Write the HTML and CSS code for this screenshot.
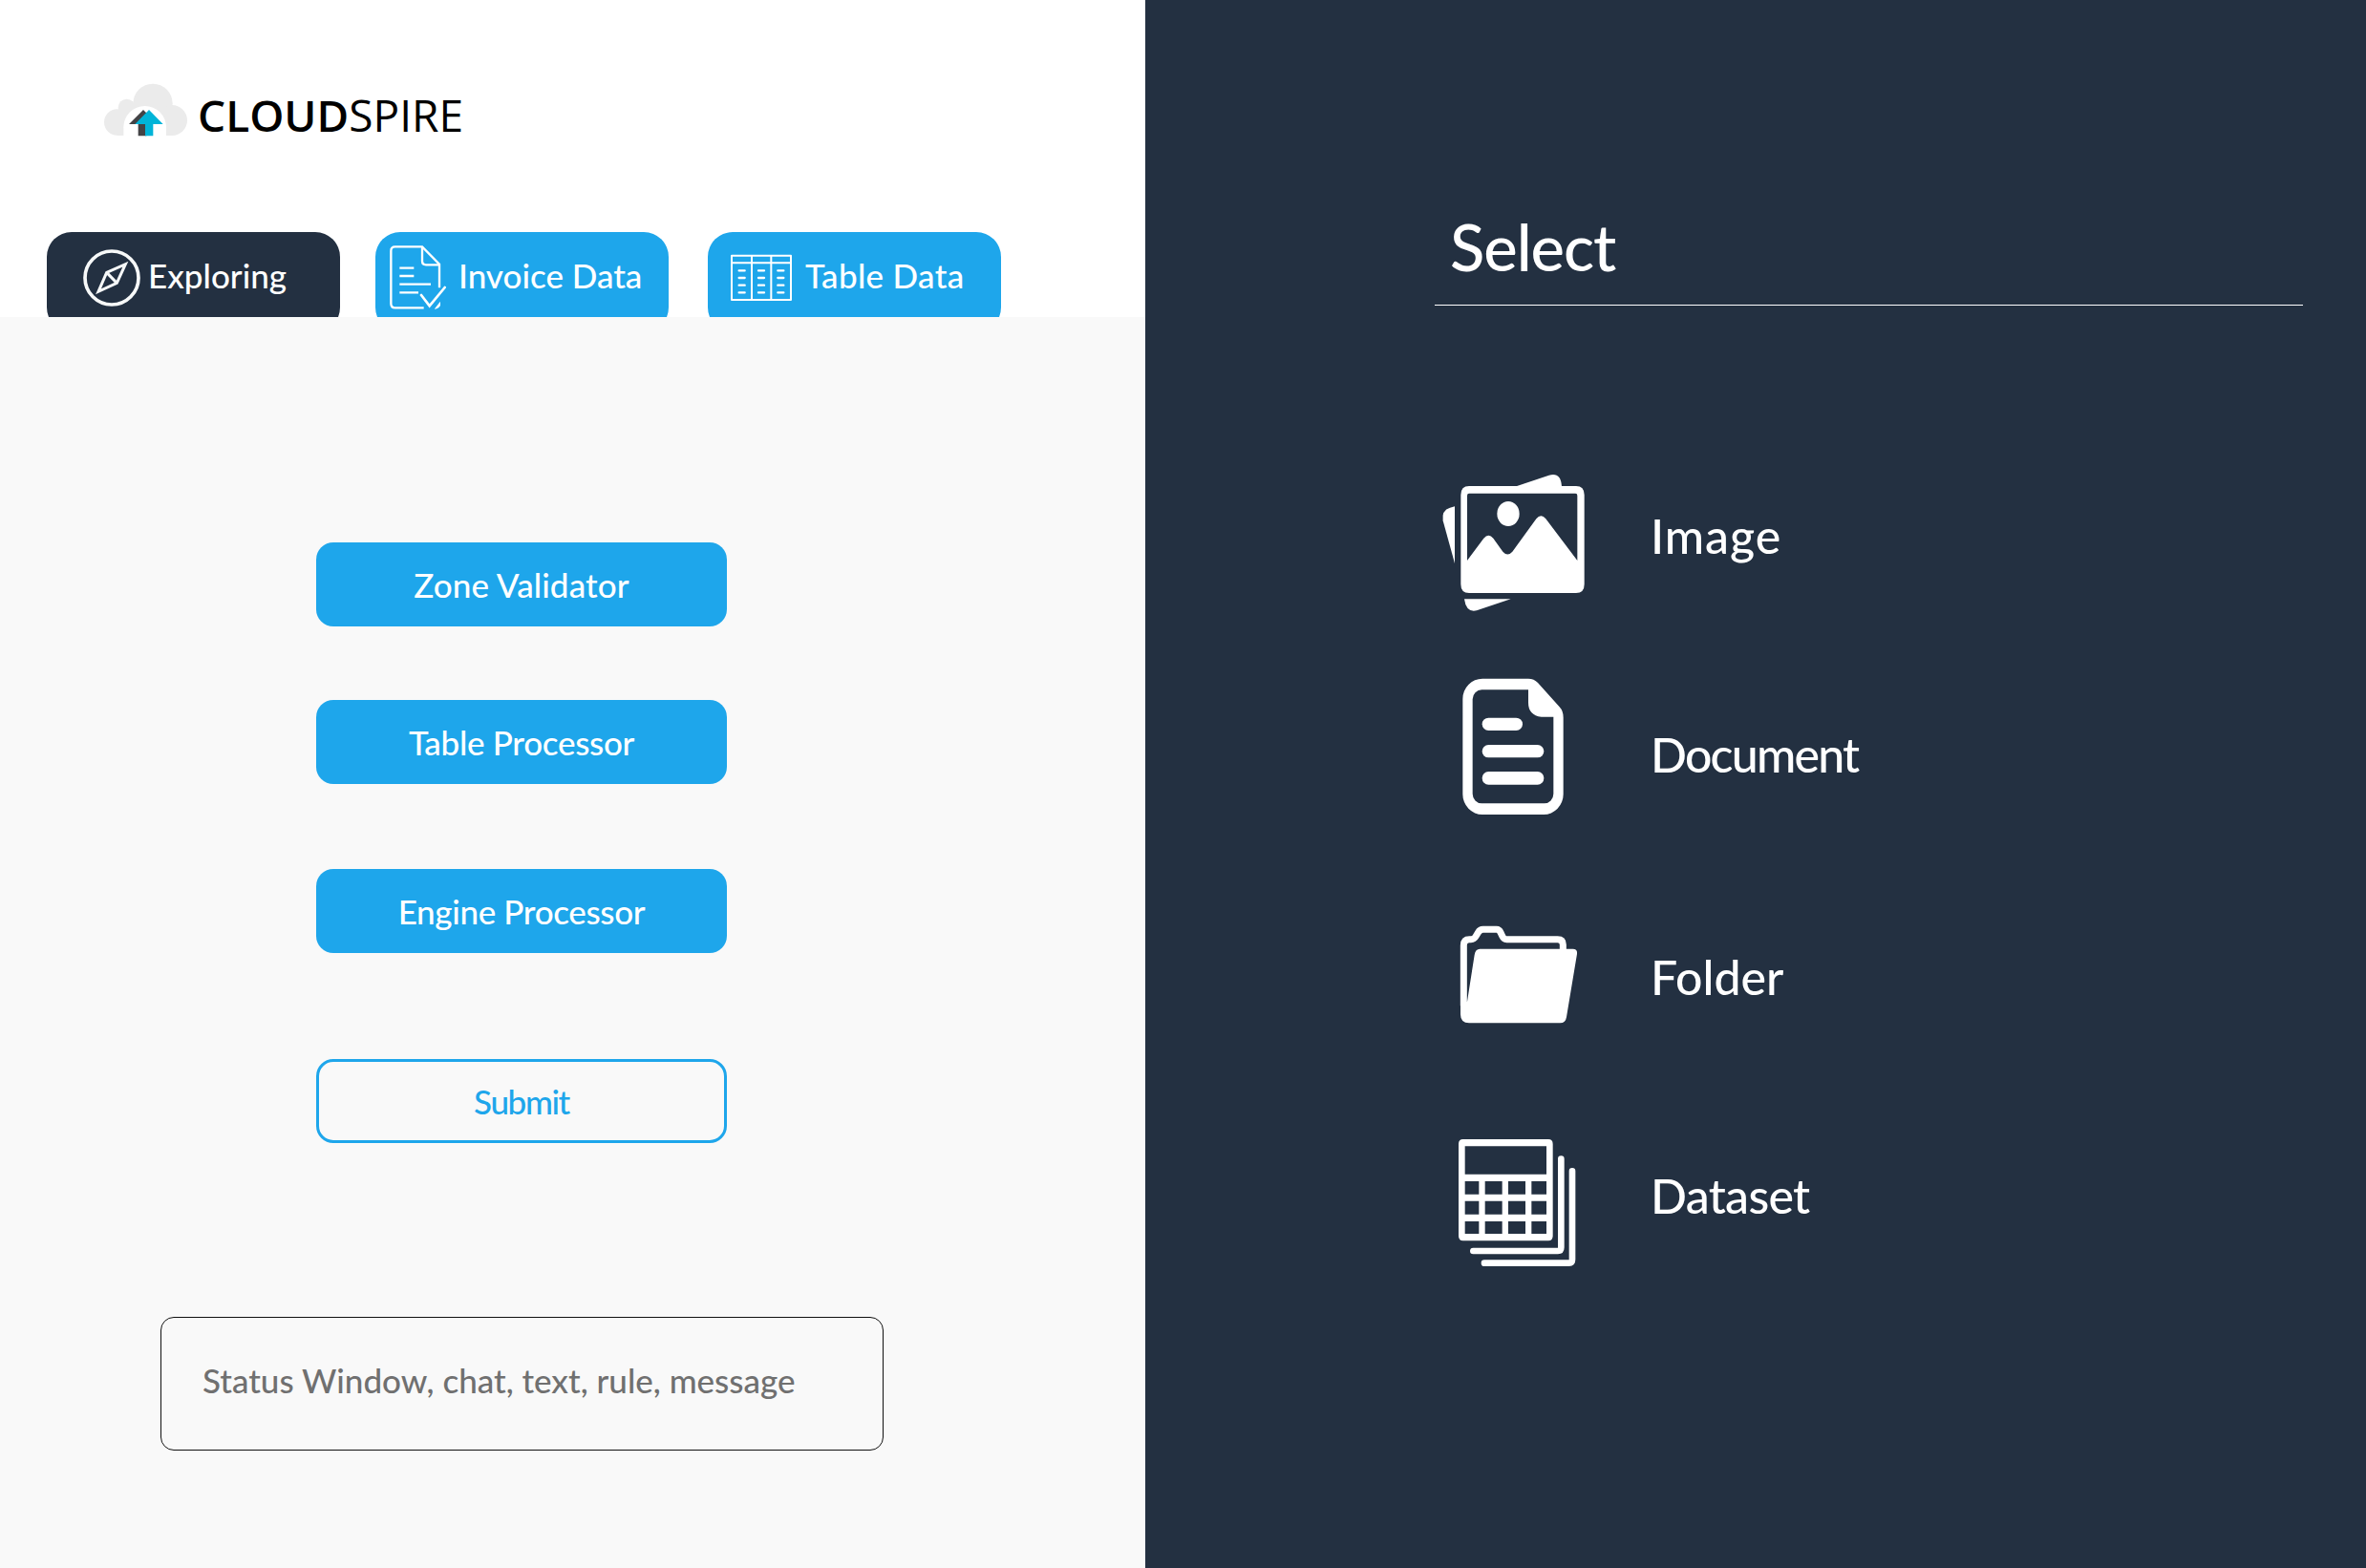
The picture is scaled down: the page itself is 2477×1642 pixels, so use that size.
FILE: index.html
```html
<!DOCTYPE html>
<html lang="en">
<head>
<meta charset="utf-8">
<title>Cloudspire</title>
<link rel="stylesheet" href="styles.css">
</head>
<body>
<div class="app">
  <main class="workspace">
    <header class="header">
      <div class="logo">
        <svg class="logo-mark" viewBox="57 51 264 168" aria-hidden="true">
          <g fill="#ebebeb">
            <circle cx="98" cy="174" r="41"/>
            <circle cx="128" cy="128" r="27"/>
            <circle cx="210" cy="115" r="62"/>
            <circle cx="270" cy="168" r="48"/>
            <path d="M98 140H270V216H98Z"/>
          </g>
          <path d="M118 219V190A67 67 0 0 1 252 190V219Z" fill="#fff"/>
          <path d="M135 180L180 135L225 180H190V217H164V180Z" fill="#434345"/>
          <path d="M154 180L198 135L242 180H211V217H186V180Z" fill="#00b4d8"/>
        </svg>
        <div class="logo-text"><span class="logo-strong">CLOUD</span>SPIRE</div>
      </div>
      <nav class="tabs">
        <a class="tab tab-exploring">
          <svg class="tab-icon" viewBox="171 39 180 267" aria-hidden="true">
            <g fill="none" stroke="#f7f9f9">
              <circle cx="261" cy="183" r="84" stroke-width="11"/>
              <path d="M219 226L245 166L304 140L277 199Z" stroke-width="9"/>
              <path d="M245 166L277 199" stroke-width="9"/>
            </g>
          </svg>
          <span>Exploring</span>
        </a>
        <a class="tab tab-invoice">
          <svg class="tab-icon" viewBox="84 39 177 267" aria-hidden="true">
            <g fill="none" stroke="#fff" stroke-width="7">
              <path d="M240 214V140L186 85H101Q88 85 88 98V264Q88 277 101 277H191"/>
              <path d="M186 85V130Q186 142 198 142H240"/>
              <path d="M115 152H160M115 177H160M115 203H213M115 229H174"/>
              <path d="M183 237L209 271L257 213" stroke-width="8" stroke-linecap="round"/>
            </g>
            <path d="M243 257V268Q241 280 224 281Z" fill="#fff"/>
          </svg>
          <span>Invoice Data</span>
        </a>
        <a class="tab tab-table">
          <svg class="tab-icon" viewBox="105 39 192 267" aria-hidden="true">
            <g fill="none" stroke="#fff" stroke-width="6">
              <path d="M108 113H294V252H108ZM108 136H294M171 113V252M232 113V252" stroke-linejoin="round"/>
              <path d="M131 160H149M192 160H210M253 160H271M131 183H149M192 183H210M253 183H271M131 206H149M192 206H210M253 206H271M131 229H149M192 229H210M253 229H271" stroke-width="7" stroke-linecap="round"/>
            </g>
          </svg>
          <span>Table Data</span>
        </a>
      </nav>
    </header>
    <section class="content">
      <div class="actions">
        <button class="button zone">Zone Validator</button>
        <button class="button table">Table Processor</button>
        <button class="button engine">Engine Processor</button>
        <button class="button submit">Submit</button>
      </div>
      <div class="status">Status Window, chat, text, rule, message</div>
    </section>
  </main>
  <aside class="sidebar">
    <h2 class="sidebar-title">Select</h2>
    <ul class="sources">
      <li class="source source-image">
        <svg class="source-icon" viewBox="30 0 480 483" aria-hidden="true">
          <g fill="#fff">
            <path fill-rule="evenodd" d="M144 87H480Q506 87 506 115V395Q506 423 480 423H144Q118 423 118 395V115Q118 87 144 87ZM144 110Q138 110 138 117V321L190 251Q205 234 220 251L250 293Q265 310 280 293L355 190Q370 172 385 190L484 321V117Q484 110 478 110Z"/>
            <ellipse cx="267" cy="174" rx="35" ry="39"/>
            <path d="M292 88L395 53Q432 42 435 88Z"/>
            <path d="M99 151V330L62 196Q57 163 84 155Z"/>
            <path d="M129 442H275L168 478Q135 486 129 442Z"/>
          </g>
        </svg>
        <span>Image</span>
      </li>
      <li class="source source-document">
        <svg class="source-icon" viewBox="30 60 480 477" aria-hidden="true">
          <g fill="#fff">
            <path fill-rule="evenodd" d="M186 62H330Q348 62 360 75L428 151Q440 164 440 184V425A62 64 0 0 1 378 489H186A62 64 0 0 1 124 425V126A62 64 0 0 1 186 62ZM184 97A29 30 0 0 0 155 127V424A29 30 0 0 0 184 454H380A29 30 0 0 0 409 424V182H371Q330 177 330 137V97Z"/>
            <rect x="185" y="185" width="127" height="40" rx="20"/>
            <rect x="185" y="270" width="194" height="40" rx="20"/>
            <rect x="185" y="354" width="194" height="41" rx="20"/>
          </g>
        </svg>
        <span>Document</span>
      </li>
      <li class="source source-folder">
        <svg class="source-icon" viewBox="30 30 480 375" aria-hidden="true">
          <path d="M127 310V120Q127 101 145 101H150Q160 101 165 92L172 80Q178 70 188 70H230Q239 70 243 80L249 92Q253 101 262 101H422Q439 101 439 118V136" fill="none" stroke="#fff" stroke-width="21"/>
          <path d="M178 131H470Q485 131 483 147L450 345Q447 364 430 364H144Q117 364 117 337V297H138L161 150Q164 131 178 131Z" fill="#fff"/>
        </svg>
        <span>Folder</span>
      </li>
      <li class="source source-dataset">
        <svg class="source-icon" viewBox="30 18 480 453" aria-hidden="true">
          <path fill="#fff" fill-rule="evenodd" d="M125 69H393Q407 69 407 84V373Q407 388 393 388H125Q111 388 111 373V84Q111 69 125 69ZM131 91V179H387V91ZM131 201V242H175V201ZM194 201V242H248V201ZM267 201V242H321V201ZM340 201V242H387V201ZM131 263V305H175V263ZM194 263V305H248V263ZM267 263V305H321V263ZM340 263V305H387V263ZM131 327V366H175V327ZM194 327V366H248V327ZM267 327V366H321V327ZM340 327V366H387V327Z"/>
          <path d="M433 131V409Q433 420 423 420H157M468 169V447Q468 458 458 458H192" fill="none" stroke="#fff" stroke-width="20" stroke-linecap="round"/>
        </svg>
        <span>Dataset</span>
      </li>
    </ul>
  </aside>
</div>
</body>
</html>
```
FILE: styles.css
```css
* {
  box-sizing: border-box;
}

body {
  margin: 0;
  font-family: Lato, sans-serif;
  font-size: 35px;
  font-weight: 500;
}

.app {
  display: grid;
  grid-template-columns: 1199px 1fr;
  height: 1642px;
  background: #233041;
}

.workspace {
  display: flex;
  flex-direction: column;
  background: #f9f9f9;
}

.header {
  display: flex;
  flex-direction: column;
  justify-content: space-between;
  height: 332px;
  padding-top: 87px;
  background: #fff;
}

.logo {
  display: flex;
  align-items: flex-start;
  gap: 10px;
  padding-left: 109px;
}

.logo-mark {
  width: 88px;
  height: 56px;
}

.logo-text {
  font: 400 46px/67px "Open Sans", sans-serif;
  color: #000;
}

.logo-strong {
  font-weight: 600;
}

/* The lower rounding of the tabs is cut off by the content area. */
.tabs {
  display: flex;
  height: 89px;
  padding-left: 49px;
  overflow: hidden;
}

.tab {
  display: flex;
  align-items: center;
  width: 307px;
  height: 105px;
  padding-bottom: 16px;
  border-radius: 26px;
  background: #1ea6eb;
  color: #fff;
  white-space: nowrap;
}

.tab-icon {
  flex: none;
  height: 89px;
}

.tab-exploring {
  gap: 8px;
  padding-left: 38px;
  background: #233041;
}

.tab-exploring .tab-icon {
  width: 60px;
}

.tab-invoice {
  gap: 13px;
  margin-left: 37px;
  padding-left: 15px;
}

.tab-invoice .tab-icon {
  width: 59px;
}

.tab-table {
  gap: 14px;
  margin-left: 41px;
  padding-left: 24px;
  letter-spacing: 0.32px;
}

.tab-table .tab-icon {
  width: 64px;
}

.content {
  flex: 1;
  padding: 236px 0 0 168px;
}

.actions {
  display: flex;
  flex-direction: column;
  width: 430px;
  margin-left: 163px;
}

.button {
  height: 88px;
  padding: 0 0 1px;
  border: 0;
  border-radius: 18px;
  background: #1ea6eb;
  color: #fff;
  font: inherit;
}

.zone {
  letter-spacing: 0.12px;
}

.table {
  margin-top: 77px;
  letter-spacing: -0.3px;
}

.engine {
  margin-top: 89px;
  letter-spacing: -0.35px;
}

.submit {
  margin-top: 111px;
  border: 3px solid #1ea6eb;
  background: transparent;
  color: #1ea6eb;
  letter-spacing: -1.38px;
}

.status {
  display: flex;
  align-items: center;
  width: 757px;
  height: 140px;
  margin-top: 182px;
  padding: 0 0 9px 43px;
  border: 1px solid #111;
  border-radius: 14px;
  color: #707070;
}

.sidebar {
  padding: 218px 66px 0 303px;
  color: #fff;
}

.sidebar-title {
  height: 102px;
  margin: 0;
  padding-left: 16px;
  border-bottom: 1px solid #fff;
  font-size: 67px;
  font-weight: 500;
  line-height: 80px;
  letter-spacing: -1.05px;
}

.sources {
  display: flex;
  flex-direction: column;
  margin: 160px 0 0 -2px;
  padding: 0;
  list-style: none;
}

.source {
  display: flex;
  align-items: center;
  gap: 68px;
  font-size: 50px;
}

.source-icon {
  width: 160px;
  height: 100%;
}

.source-image {
  height: 161px;
  letter-spacing: 0.97px;
}

.source-document {
  height: 159px;
  margin-top: 69px;
  letter-spacing: -1.77px;
}

.source-folder {
  height: 125px;
  margin-top: 91px;
}

.source-dataset {
  height: 151px;
  margin-top: 91px;
  letter-spacing: -0.68px;
}
```
